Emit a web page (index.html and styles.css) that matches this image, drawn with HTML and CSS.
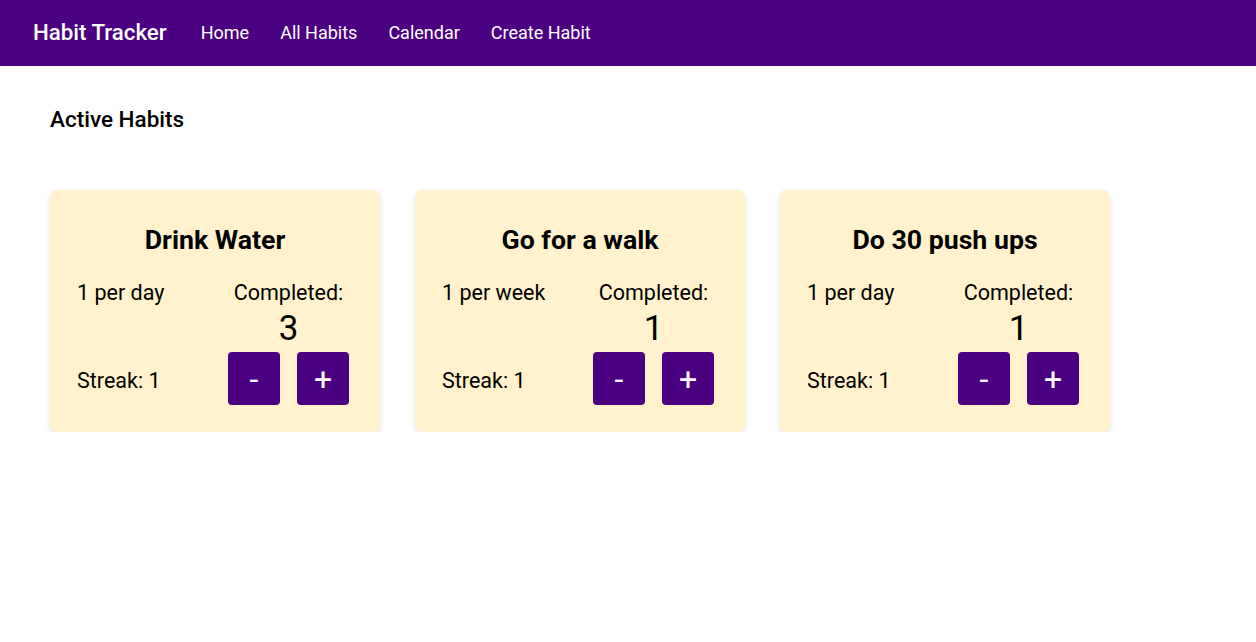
FILE: index.html
```html
<!DOCTYPE html>
<html lang="en">
<head>
<meta charset="utf-8">
<title>Habit Tracker</title>
<link rel="stylesheet" href="styles.css">
</head>
<body>
<nav class="navbar">
  <span class="brand">Habit Tracker</span>
  <a class="nav-link" href="#">Home</a>
  <a class="nav-link" href="#">All Habits</a>
  <a class="nav-link" href="#">Calendar</a>
  <a class="nav-link" href="#">Create Habit</a>
</nav>
<main class="content">
  <h2 class="section-title">Active Habits</h2>
  <div class="cards">
    <div class="card">
      <h3 class="card-title">Drink Water</h3>
      <div class="card-grid">
        <div class="freq">1 per day</div>
        <div class="completed">Completed:</div>
        <div></div>
        <div class="count">3</div>
        <div class="streak">Streak: 1</div>
        <div class="buttons"><button class="btn">-</button><button class="btn">+</button></div>
      </div>
    </div>
    <div class="card">
      <h3 class="card-title">Go for a walk</h3>
      <div class="card-grid">
        <div class="freq">1 per week</div>
        <div class="completed">Completed:</div>
        <div></div>
        <div class="count">1</div>
        <div class="streak">Streak: 1</div>
        <div class="buttons"><button class="btn">-</button><button class="btn">+</button></div>
      </div>
    </div>
    <div class="card">
      <h3 class="card-title">Do 30 push ups</h3>
      <div class="card-grid">
        <div class="freq">1 per day</div>
        <div class="completed">Completed:</div>
        <div></div>
        <div class="count">1</div>
        <div class="streak">Streak: 1</div>
        <div class="buttons"><button class="btn">-</button><button class="btn">+</button></div>
      </div>
    </div>
  </div>
</main>
</body>
</html>
```
FILE: styles.css
```css
* { box-sizing: border-box; }
body {
  margin: 0;
  font-family: Roboto, "Liberation Sans", sans-serif;
  color: #000;
  background: #fff;
}
.navbar {
  height: 66px;
  background: #4b0082;
  display: flex;
  align-items: center;
  padding: 0 33px 2px;
  gap: 31px;
}
.brand {
  color: #fff;
  font-size: 22.3px;
  font-weight: 500;
  margin-right: 3px;
}
.nav-link {
  color: #fff;
  text-decoration: none;
  font-size: 18px;
}
.content {
  padding: 0 50px;
}
.section-title {
  margin: 0;
  padding-top: 41px;
  font-size: 22.5px;
  font-weight: 500;
  line-height: 24px;
}
.cards {
  display: flex;
  gap: 35px;
  margin-top: 59px;
}
.card {
  width: 330px;
  background: #fff2cc;
  border-radius: 7px;
  box-shadow: 0 2px 5px rgba(0,0,0,0.12);
  padding: 34px 20px 27px;
}
.card-title {
  margin: 0;
  text-align: center;
  font-size: 26.7px;
  font-weight: 700;
  line-height: 32px;
}
.card-grid {
  display: grid;
  grid-template-columns: 1fr 1fr;
  margin-top: 24px;
  align-items: center;
  font-size: 21.5px;
}
.freq, .streak {
  padding-left: 7px;
}
.completed, .count, .buttons { padding-left: 2px; }
.streak { padding-top: 3px; }
.freq, .completed { line-height: 26px; }
.completed { text-align: center; }
.count {
  text-align: center;
  font-size: 35px;
  line-height: 46px;
}
.buttons {
  display: flex;
  justify-content: center;
  gap: 17px;
}
.btn {
  width: 52px;
  height: 53px;
  border: none;
  border-radius: 4px;
  background: #4b0082;
  color: #fff;
  font-family: Roboto, "Liberation Sans", sans-serif;
  font-size: 32px;
  font-weight: 400;
  padding: 0;
  cursor: pointer;
}
```
